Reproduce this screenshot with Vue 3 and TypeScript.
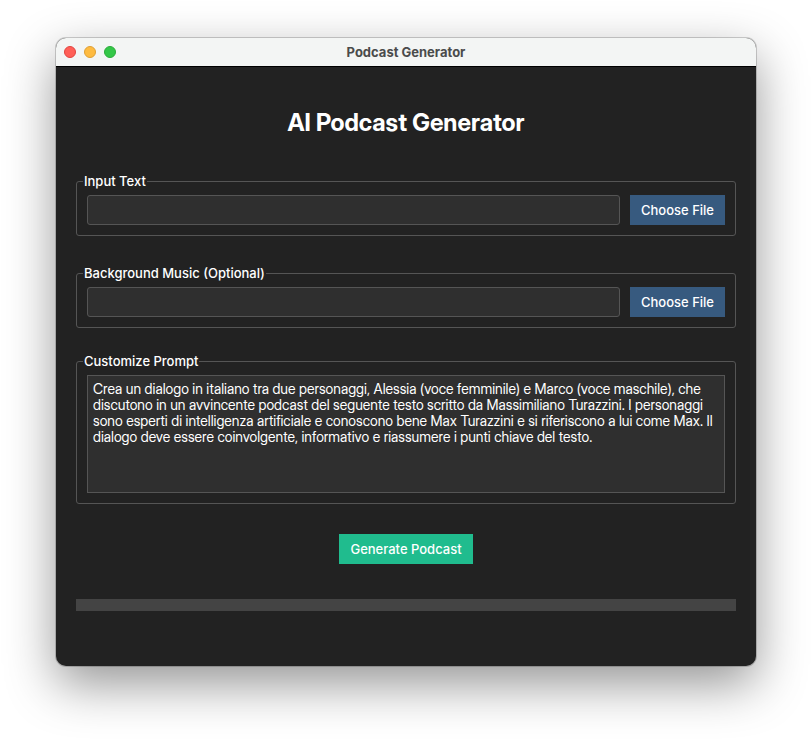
<script setup lang="ts">
import { ref } from 'vue'

interface FileField {
  id: string
  legend: string
  path: string
}

const fileFields = ref<FileField[]>([
  { id: 'input-text', legend: 'Input Text', path: '' },
  { id: 'background-music', legend: 'Background Music (Optional)', path: '' },
])

const prompt = ref(
  'Crea un dialogo in italiano tra due personaggi, Alessia (voce femminile) e Marco (voce maschile), che discutono in un avvincente podcast del seguente testo scritto da Massimiliano Turazzini. I personaggi sono esperti di intelligenza artificiale e conoscono bene Max Turazzini e si riferiscono a lui come Max. Il dialogo deve essere coinvolgente, informativo e riassumere i punti chiave del testo.',
)

const progress = ref(0)
</script>

<template>
  <div class="desktop">
    <main class="window">
      <header class="titlebar">
        <div class="lights">
          <button class="light close" type="button" aria-label="Close"></button>
          <button class="light minimize" type="button" aria-label="Minimize"></button>
          <button class="light zoom" type="button" aria-label="Zoom"></button>
        </div>
        <span class="window-title">Podcast Generator</span>
      </header>

      <form class="content" @submit.prevent>
        <h1 class="heading">AI Podcast Generator</h1>

        <div class="files">
          <fieldset v-for="field in fileFields" :key="field.id" class="group">
            <legend class="legend"><label :for="field.id">{{ field.legend }}</label></legend>
            <div class="row">
              <input :id="field.id" v-model="field.path" class="entry" type="text" />
              <button class="button choose" type="button">Choose File</button>
            </div>
          </fieldset>
        </div>

        <fieldset class="group">
          <legend class="legend"><label for="prompt">Customize Prompt</label></legend>
          <textarea id="prompt" v-model="prompt" class="prompt" spellcheck="false"></textarea>
        </fieldset>

        <button class="button generate" type="submit">Generate Podcast</button>

        <progress class="progress" :value="progress" max="100" aria-label="Progress"></progress>
      </form>
    </main>
  </div>
</template>

<style>
body {
  background: #ffffff;
}
</style>

<style scoped>
.desktop {
  box-sizing: border-box;
  min-height: 100vh;
  padding: 38px 56px 74px;
  overflow: hidden;
  font-family: Inter, "Liberation Sans", sans-serif;
  font-size: 13px;
  font-weight: 500;
  line-height: 16px;
}

.window {
  border-radius: 10px;
  background: #222222;
  color: #ffffff;
  box-shadow:
    0 0 0 1px rgba(0, 0, 0, 0.18),
    0 18px 50px rgba(0, 0, 0, 0.42);
}

.titlebar {
  display: grid;
  grid-template-columns: 1fr auto 1fr;
  align-items: center;
  height: 28px;
  padding: 0 8px;
  border-bottom: 1px solid #000000;
  border-radius: 10px 10px 0 0;
  background: #f3f5f4;
}

.lights {
  display: flex;
  gap: 8px;
}

.light {
  width: 12px;
  height: 12px;
  padding: 0;
  border: 1px solid;
  border-radius: 50%;
}

.close {
  border-color: #e2443f;
  background: #ff5f57;
}

.minimize {
  border-color: #dfa033;
  background: #febb40;
}

.zoom {
  border-color: #2bac3a;
  background: #33c748;
}

.window-title {
  color: #4a4b4b;
  font-weight: 700;
}

.content {
  display: flex;
  flex-direction: column;
  padding: 41px 20px 55px;
}

.heading {
  margin: 0 0 36px;
  font-family: "Inter Display", Inter, "Liberation Sans", sans-serif;
  font-size: 24px;
  font-weight: 700;
  line-height: 30px;
  text-align: center;
}

.files {
  display: flex;
  flex-direction: column;
  gap: 30px;
  margin-bottom: 26px;
}

.group {
  min-width: 0;
  margin: 0;
  padding: 6px 10px 10px;
  border: 1px solid #555555;
  border-radius: 3px;
}

.legend {
  margin-left: -4px;
  padding: 0 1px;
  line-height: 15px;
}

.legend label {
  display: block;
}

.row {
  display: flex;
  gap: 10px;
}

.entry,
.prompt {
  box-sizing: border-box;
  border: 1px solid #555555;
  background: #2f2f2f;
  color: #ffffff;
  font: inherit;
  outline: none;
}

.entry {
  flex: 1;
  min-width: 0;
  height: 30px;
  padding: 0 5px;
  border-radius: 3px;
}

.prompt {
  display: block;
  width: 100%;
  height: 118px;
  padding: 5px;
  font-family: "Inter Display", Inter, "Liberation Sans", sans-serif;
  font-size: 14px;
  font-weight: 400;
  resize: none;
}

.button {
  height: 30px;
  padding: 0 11px;
  border: 0;
  color: #ffffff;
  font: inherit;
  white-space: nowrap;
}

.choose {
  background: #375a7f;
}

.generate {
  align-self: center;
  margin: 30px 0 35px;
  background: #20bc8e;
}

.progress {
  display: block;
  width: 100%;
  height: 12px;
  border: 0;
  background: #444444;
  appearance: none;
}

.progress::-webkit-progress-bar {
  background: #444444;
}

.progress::-webkit-progress-value {
  background: #20bc8e;
}
</style>
